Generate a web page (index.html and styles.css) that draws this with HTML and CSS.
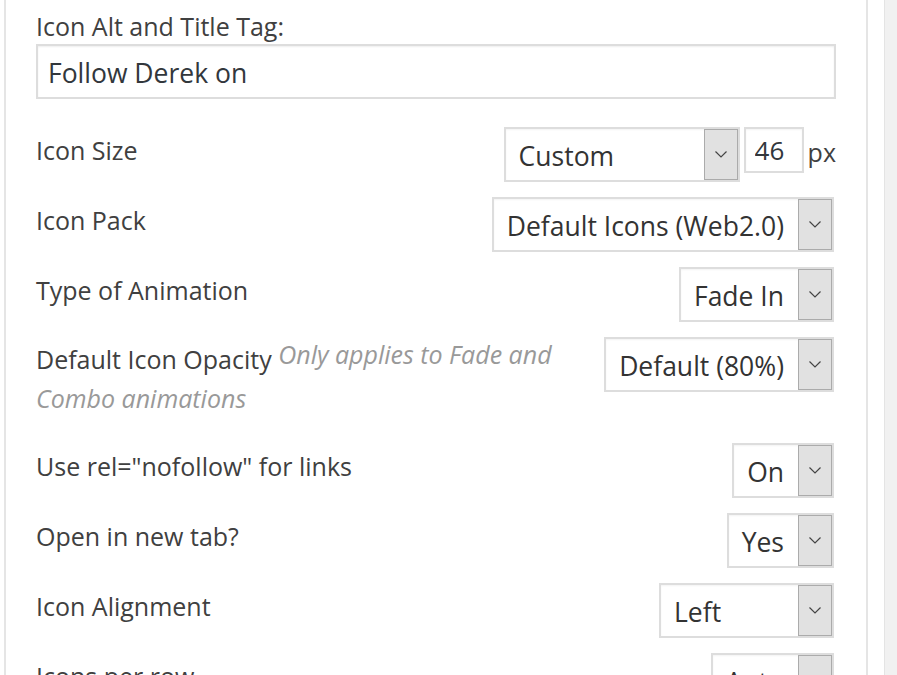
FILE: index.html
```html
<!DOCTYPE html>
<html lang="en">
<head>
    <meta charset="UTF-8">
    <meta name="viewport" content="width=device-width, initial-scale=1.0">
    <title>Social Icons Widget</title>
    <link rel="stylesheet" href="styles.css">
</head>
<body>

<div class="screen">
    <div class="panel">
        <label class="field-label" for="alt-tag">Icon Alt and Title Tag:</label>
        <input class="text-input" type="text" id="alt-tag" value="Follow Derek on">

        <div class="rows">
            <div class="row">
                <span class="row-label">Icon Size</span>
                <div class="controls">
                    <div class="select select-size">
                        <span class="select-value">Custom</span>
                        <span class="select-arrow"><svg width="12" height="7" viewBox="0 0 12 7"><path d="M0.5 0.5 L6 6 L11.5 0.5" fill="none" stroke="#444" stroke-width="1.2"/></svg></span>
                    </div>
                    <input class="num-input" type="text" value="46">
                    <span class="unit">px</span>
                </div>
            </div>

            <div class="row">
                <span class="row-label">Icon Pack</span>
                <div class="select">
                    <span class="select-value">Default Icons (Web2.0)</span>
                    <span class="select-arrow"><svg width="12" height="7" viewBox="0 0 12 7"><path d="M0.5 0.5 L6 6 L11.5 0.5" fill="none" stroke="#444" stroke-width="1.2"/></svg></span>
                </div>
            </div>

            <div class="row">
                <span class="row-label">Type of Animation</span>
                <div class="select">
                    <span class="select-value">Fade In</span>
                    <span class="select-arrow"><svg width="12" height="7" viewBox="0 0 12 7"><path d="M0.5 0.5 L6 6 L11.5 0.5" fill="none" stroke="#444" stroke-width="1.2"/></svg></span>
                </div>
            </div>

            <div class="row row-tall">
                <span class="row-label row-label-wrap">Default Icon Opacity <em class="hint">Only applies to Fade and</em><br><em class="hint">Combo animations</em></span>
                <div class="select">
                    <span class="select-value">Default (80%)</span>
                    <span class="select-arrow"><svg width="12" height="7" viewBox="0 0 12 7"><path d="M0.5 0.5 L6 6 L11.5 0.5" fill="none" stroke="#444" stroke-width="1.2"/></svg></span>
                </div>
            </div>

            <div class="row">
                <span class="row-label">Use rel="nofollow" for links</span>
                <div class="select">
                    <span class="select-value">On</span>
                    <span class="select-arrow"><svg width="12" height="7" viewBox="0 0 12 7"><path d="M0.5 0.5 L6 6 L11.5 0.5" fill="none" stroke="#444" stroke-width="1.2"/></svg></span>
                </div>
            </div>

            <div class="row">
                <span class="row-label">Open in new tab?</span>
                <div class="select">
                    <span class="select-value">Yes</span>
                    <span class="select-arrow"><svg width="12" height="7" viewBox="0 0 12 7"><path d="M0.5 0.5 L6 6 L11.5 0.5" fill="none" stroke="#444" stroke-width="1.2"/></svg></span>
                </div>
            </div>

            <div class="row">
                <span class="row-label">Icon Alignment</span>
                <div class="select select-align">
                    <span class="select-value">Left</span>
                    <span class="select-arrow"><svg width="12" height="7" viewBox="0 0 12 7"><path d="M0.5 0.5 L6 6 L11.5 0.5" fill="none" stroke="#444" stroke-width="1.2"/></svg></span>
                </div>
            </div>

            <div class="row">
                <span class="row-label">Icons per row</span>
                <div class="select">
                    <span class="select-value">Auto</span>
                    <span class="select-arrow"><svg width="12" height="7" viewBox="0 0 12 7"><path d="M0.5 0.5 L6 6 L11.5 0.5" fill="none" stroke="#444" stroke-width="1.2"/></svg></span>
                </div>
            </div>
        </div>
    </div>
    <div class="sidebar"></div>
</div>

</body>
</html>
```

FILE: styles.css
```css
html, body {
    margin: 0;
    height: 675px;
    overflow: hidden;
    background: #fff;
}

body {
    font-family: "Open Sans", "Noto Sans", sans-serif;
    color: #404040;
}

.screen {
    display: flex;
    height: 100%;
    padding-left: 4px;
}

.panel {
    flex: none;
    width: 800px;
    padding: 8px 30px 0;
    border-left: 2px solid #e5e5e5;
    border-right: 2px solid #e5e5e5;
}

.sidebar {
    flex: 1;
    margin-left: 16px;
    background: #f1f1f1;
    border-left: 1px solid #e4e4e4;
}

.field-label {
    display: block;
    font-size: 25px;
    line-height: 36px;
}

.text-input {
    display: block;
    box-sizing: border-box;
    width: 100%;
    height: 55px;
    margin: 0;
    padding: 2px 10px 0;
    border: 2px solid #ddd;
    box-shadow: inset 0 1px 2px rgba(0, 0, 0, 0.07);
    font-family: inherit;
    font-size: 26.5px;
    color: #32373c;
    outline: none;
}

.rows {
    margin-top: 28px;
    padding-right: 2px;
}

.row {
    display: flex;
    justify-content: space-between;
    align-items: flex-start;
    gap: 20px;
    margin-bottom: 15px;
}

.row-tall {
    margin-bottom: 20px;
}

.row-label {
    padding-top: 1px;
    font-size: 25px;
    line-height: 44px;
}

.row-label-wrap {
    margin-top: -3px;
    line-height: 39px;
}

.hint {
    vertical-align: 5px;
    font-size: 25px;
    color: #999;
}

.controls {
    display: flex;
    align-items: flex-start;
    margin-right: -2px;
}

.select {
    flex: none;
    display: flex;
    box-sizing: border-box;
    height: 55px;
    border: 2px solid #ddd;
    background: #fff;
    box-shadow: inset 0 1px 2px rgba(0, 0, 0, 0.05);
}

.select-size {
    width: 236px;
}

.select-align {
    width: 175px;
}

.select-value {
    flex: 1;
    padding: 4px 14px 0 13px;
    font-size: 26.5px;
    line-height: 47px;
    color: #333;
    white-space: nowrap;
}

.select-arrow {
    flex: none;
    display: flex;
    align-items: center;
    justify-content: center;
    width: 32px;
    border: 1px solid #ababab;
    background: #e1e1e1;
}

.num-input {
    box-sizing: border-box;
    width: 60px;
    height: 46px;
    margin: 0 0 0 4px;
    padding: 0 0 0 9px;
    border: 2px solid #ddd;
    box-shadow: inset 0 1px 2px rgba(0, 0, 0, 0.05);
    font-family: inherit;
    font-size: 26px;
    color: #32373c;
    outline: none;
}

.unit {
    margin-left: 4px;
    padding-top: 3px;
    font-size: 25px;
    line-height: 44px;
}
```
